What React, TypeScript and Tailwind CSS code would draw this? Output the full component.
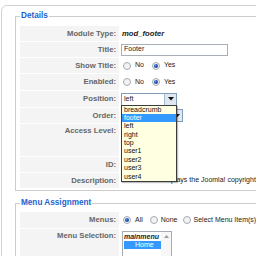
import React from "react";

function Radio({ checked }: { checked?: boolean }) {
  return (
    <svg width="8" height="8" viewBox="0 0 8 8" className="shrink-0 block">
      <circle cx="4" cy="4" r="3.5" fill="#f3f3f3" stroke="#a4abb3" strokeWidth="1" />
      {checked && <circle cx="4" cy="4" r="2.1" fill="#2457b5" />}
      {checked && <circle cx="3.4" cy="3.3" r="0.7" fill="#8fb4ee" />}
    </svg>
  );
}

function Label({ text, top }: { text: string; top?: boolean }) {
  return (
    <div
      className={
        top
          ? "w-[99px] shrink-0 bg-[#f4f4f4] flex items-start justify-end pr-[3px] pt-[2px] text-[7.7px] leading-[10px] font-bold text-[#666666] whitespace-nowrap"
          : "w-[99px] shrink-0 bg-[#f4f4f4] flex items-center justify-end pr-[3px] text-[7.7px] leading-[10px] font-bold text-[#666666] whitespace-nowrap"
      }
    >
      {text}
    </div>
  );
}

function SelectArrow() {
  return (
    <div className="w-[12px] h-full shrink-0 bg-[#dfe7f2] border-l border-[#a9b8cc] flex items-center justify-center">
      <svg width="6" height="4" viewBox="0 0 6 4" className="block">
        <path d="M0 0 L6 0 L3 3.5 Z" fill="#111" />
      </svg>
    </div>
  );
}

const items = ["breadcrumb", "footer", "left", "right", "top", "user1", "user2", "user3", "user4"];

export default function App() {
  return (
    <div className="w-[256px] h-[256px] overflow-hidden bg-white pl-[1px] pt-[5px] font-['Liberation_Sans',Arial,sans-serif] text-[7px] text-[#222]">
      <div className="w-[330px] h-[300px] border border-[#d2d2d2] rounded-[6px] pl-[13px] pt-[5px]">
        <fieldset className="border border-[#cccccc] pl-[4px] pr-[4px] pb-[2px] pt-[5px]">
          <legend className="px-[1px] text-[8.2px] leading-[10px] font-bold text-[#1f62cc]">Details</legend>
          <div className="flex flex-col gap-px">
            <div className="flex gap-px h-[15px]">
              <Label text="Module Type:" />
              <div className="flex items-center pl-[2px] font-bold italic text-[7.7px] text-[#222]">mod_footer</div>
            </div>
            <div className="flex gap-px h-[15px]">
              <Label text="Title:" />
              <div className="flex items-center pl-[1px]">
                <div className="w-[107px] h-[12px] border border-[#a9afb6] bg-white flex items-center px-[2px] text-[7px]">Footer</div>
              </div>
            </div>
            <div className="flex gap-px h-[15px]">
              <Label text="Show Title:" />
              <div className="flex items-center pl-[3px]">
                <Radio />
                <span className="ml-[4px]">No</span>
                <span className="ml-[8px]"><Radio checked /></span>
                <span className="ml-[4px]">Yes</span>
              </div>
            </div>
            <div className="flex gap-px h-[16px]">
              <Label text="Enabled:" />
              <div className="flex items-center pl-[3px]">
                <Radio />
                <span className="ml-[4px]">No</span>
                <span className="ml-[8px]"><Radio checked /></span>
                <span className="ml-[4px]">Yes</span>
              </div>
            </div>
            <div className="flex gap-px h-[16px] relative z-10">
              <Label text="Position:" />
              <div className="flex items-center pl-[1px]">
                <div className="relative w-[56px] h-[13px] border border-[#7f9db9] bg-white flex items-center">
                  <span className="flex-1 pl-[2px] leading-[10px]">left</span>
                  <SelectArrow />
                  <div className="absolute left-[-1px] top-full w-[56px] border border-[#3c3c3c] bg-[#ffffe1] shadow-[1px_1px_1px_rgba(0,0,0,0.25)]">
                    {items.map((it) => (
                      <div
                        key={it}
                        className={
                          it === "footer"
                            ? "h-[8.4px] leading-[8.4px] pl-[2px] bg-[#3399ff] text-white"
                            : "h-[8.4px] leading-[8.4px] pl-[2px] text-[#111]"
                        }
                      >
                        {it}
                      </div>
                    ))}
                  </div>
                </div>
              </div>
            </div>
            <div className="flex gap-px h-[15px]">
              <Label text="Order:" />
              <div className="flex items-center pl-[1px]">
                <div className="w-[62px] h-[13px] border border-[#7f9db9] bg-white flex items-center">
                  <span className="flex-1" />
                  <SelectArrow />
                </div>
              </div>
            </div>
            <div className="flex gap-px h-[32px]">
              <Label text="Access Level:" top />
              <div className="flex-1" />
            </div>
            <div className="flex gap-px h-[15px]">
              <Label text="ID:" />
              <div className="flex-1" />
            </div>
            <div className="flex gap-px h-[15px]">
              <Label text="Description:" />
              <div className="flex items-center pl-[2px] whitespace-nowrap">This Module displays the Joomla! copyright information</div>
            </div>
          </div>
        </fieldset>

        <fieldset className="mt-[7px] border border-[#cccccc] pl-[4px] pr-[4px] pb-[2px] pt-[4px]">
          <legend className="px-[1px] text-[8.2px] leading-[10px] font-bold text-[#1f62cc]">Menu Assignment</legend>
          <div className="flex flex-col gap-px">
            <div className="flex gap-px h-[16px]">
              <Label text="Menus:" />
              <div className="flex items-center pl-[3px] whitespace-nowrap">
                <Radio checked />
                <span className="ml-[4px]">All</span>
                <span className="ml-[7px]"><Radio /></span>
                <span className="ml-[3px]">None</span>
                <span className="ml-[5px]"><Radio /></span>
                <span className="ml-[3px]">Select Menu Item(s)</span>
              </div>
            </div>
            <div className="flex gap-px h-[80px]">
              <Label text="Menu Selection:" top />
              <div className="pl-[2px] pt-[2px]">
                <div className="w-[50px] h-[70px] border border-[#a5acb5] bg-white flex">
                  <div className="w-[38px] overflow-hidden pl-[1px]">
                    <div className="h-[9px] leading-[9px] font-bold italic whitespace-nowrap">mainmenu</div>
                    <div className="h-[8px] leading-[8px] bg-[#3399ff] text-white pl-[11px]">Home</div>
                  </div>
                  <div className="flex-1 bg-[#f7f7f7] flex justify-center pt-[3px]">
                    <svg width="5" height="3" viewBox="0 0 5 3" className="block">
                      <path d="M0 3 L5 3 L2.5 0 Z" fill="#9a9a9a" />
                    </svg>
                  </div>
                </div>
              </div>
            </div>
          </div>
        </fieldset>
      </div>
    </div>
  );
}
